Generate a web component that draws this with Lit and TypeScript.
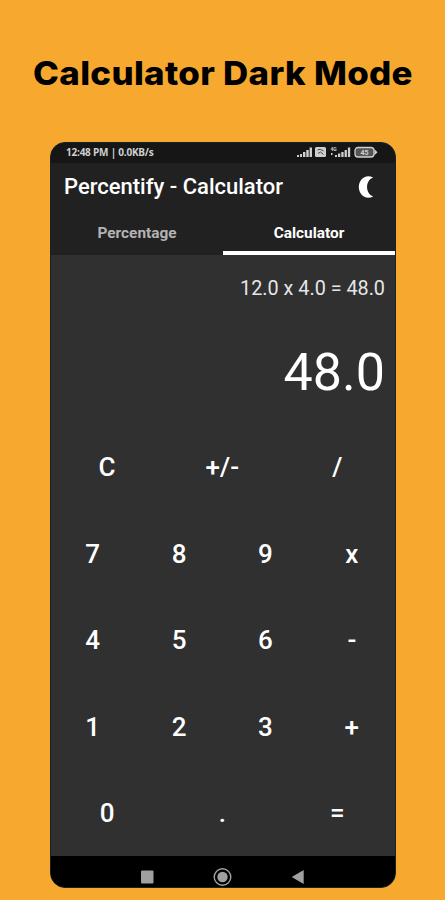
import { LitElement, html, css } from "lit";
import { customElement, state } from "lit/decorators.js";

@customElement("status-bar")
class StatusBar extends LitElement {
  static styles = css`
    :host { display: flex; justify-content: space-between; align-items: flex-start; height: 20px;
      padding: 0 15px 0 15px; background: #161616; color: #d0d0d0; }
    .clock { font: 700 10px/18px "Open Sans", sans-serif; white-space: nowrap; letter-spacing: -0.22px; }
    svg { display: block; margin: 1.500px 2px 0 0; }
    .num { font: 700 7px "Roboto", sans-serif; }
    .net { font: 700 5px "Roboto", sans-serif; }
  `;
  render() {
    return html`
      <span class="clock">12:48 PM | 0.0KB/s</span>
      <svg width="82" height="14" viewBox="0 0 82 14" fill="#cfcfcf">
        <path d="M1 10h2v2H1zM4 9h2v3H4zM7 7h2.4v5H7zM10.3 5h2.4v7h-2.4zM13.6 2.500h2.400v9.500h-2.400z"/>
        <rect x="19" y="2" width="11" height="10" rx="1.500"/>
        <path d="M21.500 5c2-1 4-.500 6 1M22 8.500l2.500-1.500 3 2.500" stroke="#444" fill="none" stroke-width="1"/>
        <text class="net" x="34.500" y="5.500">4G</text>
        <path d="M35 8h1.500v2h-1.500zM39 10h2v2h-2zM42 8.500h2.300v3.500h-2.300zM45.300 7h2.300v5h-2.300zM48.600 5h2.300v7h-2.300zM51.900 2.500h2.300v9.500h-2.300z"/>
        <rect x="59" y="2.500" width="19" height="9.500" rx="3" fill="#555" stroke="#cfcfcf" stroke-width="1.300"/>
        <text class="num" x="64.500" y="9.700">45</text>
        <path d="M78.500 4.200l3 3-3 3z"/>
      </svg>
    `;
  }
}

@customElement("calc-keypad")
class CalcKeypad extends LitElement {
  static styles = css`
    :host { display: flex; flex-direction: column; height: 432.500px; }
    .row { display: flex; flex: 1; margin-left: -1.500px; }
    .key { flex: 1; min-width: 0; padding: 1px 0 0; border: 0; background: none; color: #fff;
      font: 500 26px/30px "Roboto", sans-serif; }
  `;
  private rows = [
    ["C", "+/-", "/"],
    ["7", "8", "9", "x"],
    ["4", "5", "6", "-"],
    ["1", "2", "3", "+"],
    ["0", ".", "="],
  ];
  render() {
    return this.rows.map(
      (row) => html`<div class="row">${row.map((k) => html`<button class="key">${k}</button>`)}</div>`
    );
  }
}

@customElement("app-root")
class AppRoot extends LitElement {
  static styles = css`
    :host { display: flex; flex-direction: column; align-items: center; box-sizing: border-box;
      width: 100%; height: 900px; background: #f7a92f; font-family: "Roboto", sans-serif; overflow: hidden; }
    .heading { margin: 52px 0 0; height: 90px; font: 800 32.500px/44px "Inter", sans-serif;
      color: #000; white-space: nowrap; letter-spacing: 0.300px; transform: scaleX(1.073); }
    .phone { box-sizing: border-box; width: 346px; height: 746px; margin-left: 1px; border-radius: 15px; overflow: hidden;
      background: #303030; border: 1px solid #14232b; display: flex; flex-direction: column; }
    .bar { display: flex; align-items: center; justify-content: space-between; height: 48px;
      padding: 0 21px 0 13px; background: #212121; color: #fff; }
    .title { font: 500 22px/26px "Roboto", sans-serif; white-space: nowrap; }
    .tabs { display: flex; height: 44px; background: #212121; }
    .tab { flex: 1; box-sizing: border-box; padding-top: 13px; text-align: center;
      font: 700 15.400px/18px "Roboto", sans-serif; color: #b3b3b3; border-bottom: 4px solid transparent; }
    .tab.active { color: #fff; border-bottom-color: #fff; }
    .display { flex: 1; padding: 21px 10px 0; text-align: right; color: #fff; }
    .expression { font-size: 19.800px; line-height: 26px; color: #e6e6e6; }
    .result { margin-top: 40px; font-size: 52px; line-height: 62px; }
    .nav { display: flex; align-items: center; height: 31px; background: #000; }
    .nav svg { display: block; }
  `;
  @state() private active = "Calculator";
  render() {
    return html`
      <h1 class="heading">Calculator Dark Mode</h1>
      <main class="phone">
        <status-bar></status-bar>
        <header class="bar">
          <span class="title">Percentify - Calculator</span>
          <svg width="16" height="22" viewBox="0 0 16 22"><path d="M15.200 1.500C7-2.500 .800 4 .800 11S7 24.500 15.200 20.500C7 17.500 7 4.500 15.200 1.500z" fill="#fff"/></svg>
        </header>
        <nav class="tabs">
          ${["Percentage", "Calculator"].map(
            (t) => html`<div class="tab ${t === this.active ? "active" : ""}" @click=${() => (this.active = t)}>${t}</div>`
          )}
        </nav>
        <section class="display">
          <div class="expression">12.0 x 4.0 = 48.0</div>
          <div class="result">48.0</div>
        </section>
        <calc-keypad></calc-keypad>
        <footer class="nav">
          <svg width="344" height="31" viewBox="0 0 344 31" fill="#a0a0a0">
            <rect x="90" y="14.500" width="12.500" height="13" rx="1"/>
            <circle cx="171.500" cy="21" r="8.300" fill="none" stroke="#a0a0a0" stroke-width="1.400"/>
            <circle cx="171.500" cy="21" r="5.200"/>
            <path d="M240.700 21L252.700 14V28z"/>
          </svg>
        </footer>
      </main>
    `;
  }
}
